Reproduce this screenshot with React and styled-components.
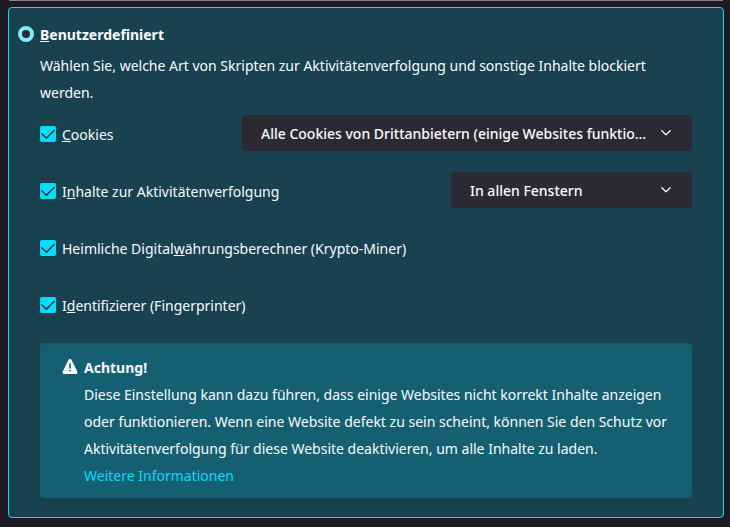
import React from "react";
import styled, { createGlobalStyle } from "styled-components";

const GlobalStyle = createGlobalStyle`
  * { box-sizing: border-box; }
  body {
    margin: 0;
    background: #1c1b22;
    color: #fbfbfe;
    font-family: "Noto Sans", "Open Sans", sans-serif;
    font-size: 14px;
    line-height: 27px;
  }
`;

const Page = styled.main`
  padding: 0 6px 9px 8px;
`;

const PreviousCard = styled.div`
  height: 1px;
  margin: 0 1px 6px;
  background: #85858a;
`;

const Card = styled.section`
  border: 1px solid #00ddff;
  border-radius: 4px;
  background: #18424f;
  padding: 13px 31px 19px;
`;

const Heading = styled.label`
  display: flex;
  align-items: center;
  gap: 6px;
  margin-left: -22px;
  font-weight: 700;
`;

const Radio = styled.input`
  appearance: none;
  width: 16px;
  height: 16px;
  margin: 0 0 1px;
  border: 4px solid #80ebff;
  border-radius: 50%;
  background: #2b2a33;
`;

const Key = styled.span`
  text-decoration: underline;
  text-decoration-thickness: 1px;
  text-underline-offset: 1px;
  text-decoration-skip-ink: none;
`;

const Description = styled.p`
  margin: 4px 0 9px;
`;

const Options = styled.div`
  display: grid;
  gap: 21px;
`;

const Row = styled.div`
  display: flex;
  align-items: center;
  justify-content: space-between;
  height: 36px;
`;

const CheckLabel = styled.label`
  display: flex;
  align-items: center;
  gap: 6px;
  padding-top: 2px;
`;

const CheckBox = styled.span`
  display: grid;
  width: 16px;
  height: 16px;
  > * { grid-area: 1 / 1; }
  svg { pointer-events: none; visibility: hidden; }
  input:checked + svg { visibility: visible; }
`;

const CheckInput = styled.input`
  appearance: none;
  width: 16px;
  height: 16px;
  margin: 0;
  border-radius: 2px;
  background: #2b2a33;
  &:checked { background: #00ddff; }
`;

const SelectWrap = styled.span`
  display: grid;
  align-items: center;
  width: ${(p) => p.$width};
  > * { grid-area: 1 / 1; }
  svg { justify-self: end; margin-right: 20px; pointer-events: none; }
`;

const Select = styled.select`
  appearance: none;
  width: 100%;
  height: 36px;
  padding: 0 40px 0 19px;
  border: 0;
  border-radius: 4px;
  background: #2b2a33;
  color: #fbfbfe;
  font: inherit;
  font-weight: 500;
  text-overflow: ellipsis;
`;

const Warning = styled.aside`
  display: flex;
  gap: 6px;
  margin-top: 21px;
  padding: 11px 20px 9px 22px;
  border-radius: 4px;
  background: #146072;
  svg { flex: none; margin-top: 5px; }
`;

const Title = styled.strong`
  display: block;
  font-weight: 700;
`;

const Text = styled.p`
  margin: 0;
`;

const Link = styled.a`
  color: #00ddff;
  text-decoration: none;
`;

function Check({ before = "", accessKey, after }) {
  return (
    <CheckLabel>
      <CheckBox>
        <CheckInput type="checkbox" defaultChecked />
        <svg width="16" height="16" viewBox="0 0 16 16" fill="none" stroke="#2b2a33" strokeWidth="1.3" strokeLinecap="round" strokeLinejoin="round">
          <path d="M1.7 7.8 6.5 12.3 14.3 4.3" />
        </svg>
      </CheckBox>
      <span>{before}<Key>{accessKey}</Key>{after}</span>
    </CheckLabel>
  );
}

function Dropdown({ width, label, children }) {
  return (
    <SelectWrap $width={width}>
      <Select aria-label={label}>
        <option>{children}</option>
      </Select>
      <svg width="12" height="12" viewBox="0 0 12 12" fill="none" stroke="#fbfbfe" strokeWidth="1.2" strokeLinecap="round" strokeLinejoin="round">
        <path d="M1.8 3.7 6 7.8 10.2 3.7" />
      </svg>
    </SelectWrap>
  );
}

export default function App() {
  return (
    <Page>
      <GlobalStyle />
      <PreviousCard />
      <Card>
        <Heading>
          <Radio type="radio" name="protection" defaultChecked />
          <span><Key>B</Key>enutzerdefiniert</span>
        </Heading>
        <Description>
          Wählen Sie, welche Art von Skripten zur Aktivitätenverfolgung und sonstige Inhalte blockiert werden.
        </Description>
        <Options>
          <Row>
            <Check accessKey="C" after="ookies" />
            <Dropdown width="450px" label="Cookies">
              Alle Cookies von Drittanbietern (einige Websites funktionieren dann eventuell nicht mehr)
            </Dropdown>
          </Row>
          <Row>
            <Check before="I" accessKey="n" after="halte zur Aktivitätenverfolgung" />
            <Dropdown width="241px" label="Inhalte zur Aktivitätenverfolgung">In allen Fenstern</Dropdown>
          </Row>
          <Row>
            <Check before="Heimliche Digital" accessKey="w" after="ährungsberechner (Krypto-Miner)" />
          </Row>
          <Row>
            <Check before="I" accessKey="d" after="entifizierer (Fingerprinter)" />
          </Row>
        </Options>
        <Warning>
          <svg width="16" height="16" viewBox="0 0 16 16">
            <path fill="#fbfbfe" fillRule="evenodd" d="M6.4 1a1.8 1.8 0 0 1 3.2 0l5.7 11.4a1.8 1.8 0 0 1-1.6 2.6H2.3a1.8 1.8 0 0 1-1.6-2.6zM8 4.2a.8.8 0 0 0-.8.8v3.9a.8.8 0 0 0 1.6 0V5A.8.8 0 0 0 8 4.2zM8 10.7a.9.9 0 1 0 0 1.8.9.9 0 0 0 0-1.8z" />
          </svg>
          <div>
            <Title>Achtung!</Title>
            <Text>
              Diese Einstellung kann dazu führen, dass einige Websites nicht korrekt Inhalte anzeigen oder funktionieren. Wenn eine Website defekt zu sein scheint, können Sie den Schutz vor Aktivitätenverfolgung für diese Website deaktivieren, um alle Inhalte zu laden.
            </Text>
            <Link href="#info">Weitere Informationen</Link>
          </div>
        </Warning>
      </Card>
    </Page>
  );
}
